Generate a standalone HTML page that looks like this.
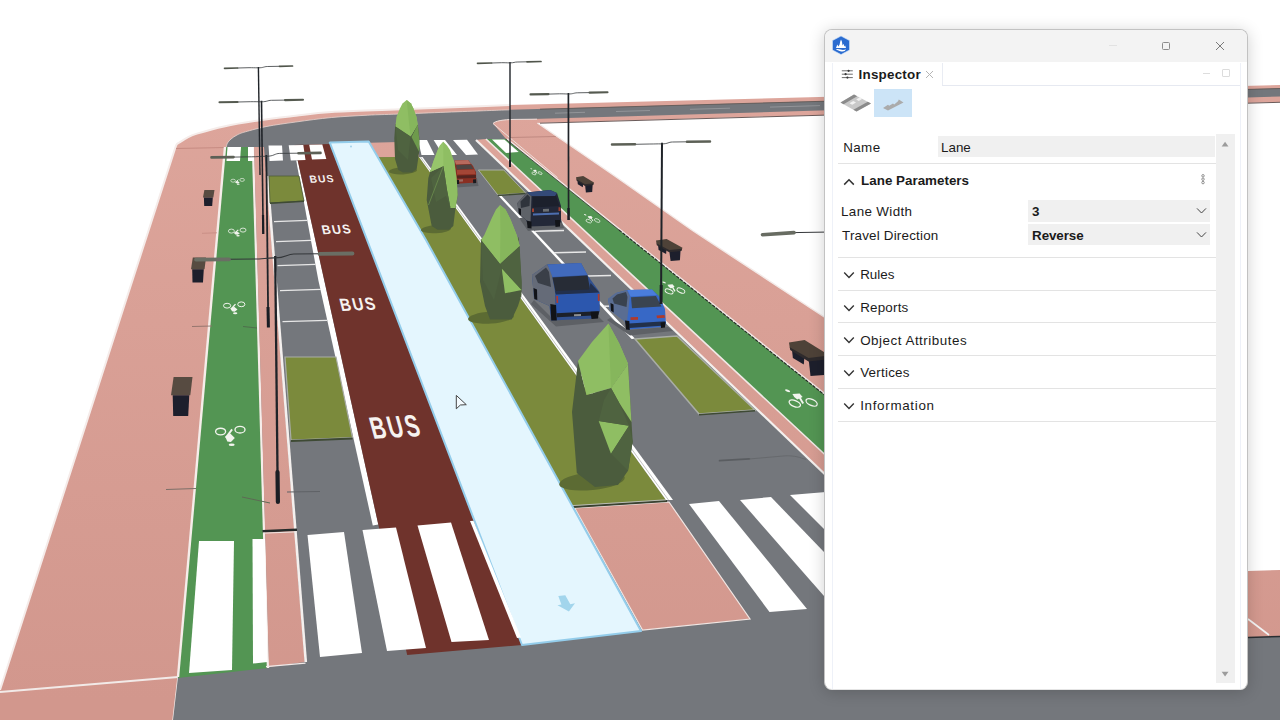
<!DOCTYPE html>
<html><head><meta charset="utf-8"><title>Inspector</title>
<style>
html,body{margin:0;padding:0;background:#fff;}
body{width:1280px;height:720px;overflow:hidden;position:relative;font-family:"Liberation Sans",sans-serif;}
#scene{position:absolute;left:0;top:0;width:1280px;height:720px;display:block;}
#win{position:absolute;left:824px;top:29px;width:424px;height:661px;box-sizing:border-box;background:#fff;border:1px solid #C2C2C2;border-bottom-color:#E4E4E4;border-radius:8px;
 box-shadow:0 2px 16px rgba(0,0,0,.19);overflow:hidden;}
#tb{position:absolute;left:0;top:0;width:100%;height:32px;background:#F3F3F3;}
.abs{position:absolute;}
.t{position:absolute;white-space:nowrap;color:#1b1b1b;font-size:13px;line-height:16px;}
.b{font-weight:bold;}
.sep{position:absolute;left:13px;width:378px;height:1px;background:#E3E3E3;}
.fld{position:absolute;background:#F0F0F0;}
</style></head><body>
<svg id="scene" width="1280" height="720" viewBox="0 0 1280 720">
<defs><linearGradient id="pk" gradientUnits="userSpaceOnUse" x1="0" y1="110" x2="0" y2="700"><stop offset="0" stop-color="#DDA59B"/><stop offset="1" stop-color="#D2978D"/></linearGradient></defs>
<rect width="1280" height="720" fill="#fff"/>
<path d="M0,720 L0,690 L175.4,147.5 C175.7,146.9 176.1,145.0 177.0,144.0 C177.9,143.0 179.1,142.7 180.8,141.7 C182.5,140.7 184.3,139.2 187.0,137.8 C189.7,136.5 190.8,135.5 197.0,133.6 C203.2,131.7 213.5,128.6 224.0,126.4 C234.5,124.2 247.8,122.0 259.8,120.2 C271.8,118.4 283.8,117.1 295.8,115.7 C307.8,114.3 314.3,113.1 331.7,112.0 C349.1,110.9 375.3,110.3 400.0,109.3 C424.7,108.3 461.7,106.9 480.0,106.2 C498.3,105.5 505.0,105.2 510.0,105.0 L1280,85 L1280,102 L537.5,123 L614,175.5 L692.5,230.5 L825,317.5 L1248,571 L1280,570 L1280,720 Z" fill="url(#pk)"/>
<path d="M0,690 L175.4,147.5 C175.7,146.9 176.1,145.0 177.0,144.0 C177.9,143.0 179.1,142.7 180.8,141.7 C182.5,140.7 184.3,139.2 187.0,137.8 C189.7,136.5 190.8,135.5 197.0,133.6 C203.2,131.7 213.5,128.6 224.0,126.4 C234.5,124.2 247.8,122.0 259.8,120.2 C271.8,118.4 283.8,117.1 295.8,115.7 C307.8,114.3 314.3,113.1 331.7,112.0 C349.1,110.9 375.3,110.3 400.0,109.3 C424.7,108.3 461.7,106.9 480.0,106.2 C498.3,105.5 505.0,105.2 510.0,105.0" fill="none" stroke="#F5ECEA" stroke-width="2.0"/>
<line x1="176.0" y1="148.5" x2="226.0" y2="147.5" stroke="#C0847B" stroke-width="0.80" />
<line x1="0.0" y1="692.0" x2="178.0" y2="677.0" stroke="#F2EAE8" stroke-width="1.80" />
<line x1="178.3" y1="677.0" x2="173.3" y2="720.0" stroke="#F2EAE8" stroke-width="2.00" />
<line x1="510.0" y1="137.5" x2="556.0" y2="136.5" stroke="#B8817A" stroke-width="0.80" />
<path d="M226.3,147.0 C226.5,146.3 226.7,144.3 227.5,143.0 C228.3,141.7 229.4,140.3 231.0,139.0 C232.6,137.7 234.6,136.2 237.0,135.0 C239.4,133.8 240.5,133.2 245.5,131.8 C250.5,130.4 258.6,128.0 267.0,126.4 C275.4,124.8 285.0,123.5 295.8,122.0 C306.6,120.5 319.7,118.6 331.7,117.5 C343.7,116.4 356.3,115.8 367.7,115.2 C379.1,114.6 381.3,114.7 400.0,114.0 C418.7,113.3 461.7,111.6 480.0,110.9 C498.3,110.2 505.0,110.0 510.0,109.8 L1280,88.3 L1280,96.5 L630,116.3 L514,119.4 C503,119.6 495,121 493,123.5 L506,139 L476,140 L726.5,380 L825,473 L1248,637 L1280,637 L1280,720 L173,720 L178,677 Z" fill="#74777C"/>
<line x1="1248.0" y1="637.5" x2="1280.0" y2="636.5" stroke="#2A2F33" stroke-width="1.50" />
<line x1="1248.0" y1="619.0" x2="1269.0" y2="635.0" stroke="#F4F4F4" stroke-width="1.60" />
<line x1="555.0" y1="113.2" x2="585.0" y2="112.3" stroke="#9A9C9F" stroke-width="0.80" />
<line x1="616.0" y1="111.5" x2="650.0" y2="110.5" stroke="#9A9C9F" stroke-width="0.80" />
<line x1="690.0" y1="109.3" x2="730.0" y2="108.2" stroke="#9A9C9F" stroke-width="0.80" />
<line x1="770.0" y1="107.1" x2="820.0" y2="105.6" stroke="#9A9C9F" stroke-width="0.80" />
<path d="M540,123.2 L1280,102.3" stroke="#5A4A48" stroke-width="0.9" fill="none"/>
<path d="M540,109.2 L1280,88.5" stroke="#5E5552" stroke-width="0.8" fill="none"/>
<path d="M226.3,147.0 C226.5,146.3 226.7,144.3 227.5,143.0 C228.3,141.7 229.4,140.3 231.0,139.0 C232.6,137.7 234.6,136.2 237.0,135.0 C239.4,133.8 240.5,133.2 245.5,131.8 C250.5,130.4 258.6,128.0 267.0,126.4 C275.4,124.8 285.0,123.5 295.8,122.0 C306.6,120.5 319.7,118.6 331.7,117.5 C343.7,116.4 356.3,115.8 367.7,115.2 C379.1,114.6 381.3,114.7 400.0,114.0 C418.7,113.3 461.7,111.6 480.0,110.9 C498.3,110.2 505.0,110.0 510.0,109.8" fill="none" stroke="#E6D3CE" stroke-width="0.8"/>
<path d="M537,119.2 L514,119.4 C503,119.6 495,121 493,123.5 L512.5,140 L557.5,177.5" fill="none" stroke="#EEDFDB" stroke-width="1.0"/>
<polygon points="225.0,147.0 253.0,147.0 268.0,668.0 177.9,678.0" fill="#539553" />
<line x1="225.0" y1="147.0" x2="178.0" y2="677.0" stroke="#F6EDEA" stroke-width="2.40" />
<line x1="253.0" y1="147.0" x2="268.0" y2="668.0" stroke="#F6EDEA" stroke-width="2.40" />
<polygon points="254.0,147.0 264.0,147.0 304.8,662.0 269.0,667.0" fill="url(#pk)" />
<line x1="267.3" y1="176.0" x2="305.8" y2="662.0" stroke="#F4F0EE" stroke-width="2.60" />
<line x1="262.5" y1="531.2" x2="297.0" y2="529.7" stroke="#262B2A" stroke-width="2.40" />
<line x1="263.0" y1="533.2" x2="297.0" y2="531.8" stroke="#EFE6E3" stroke-width="1.00" />
<polygon points="296.2,160.5 297.7,160.5 378.3,524.4 372.8,525.4 318.3,280.0" fill="#FFFFFF" />
<line x1="274.0" y1="221.6" x2="307.5" y2="220.4" stroke="#E8E8E8" stroke-width="1.30" />
<line x1="276.0" y1="241.6" x2="311.0" y2="240.4" stroke="#E8E8E8" stroke-width="1.30" />
<line x1="277.5" y1="265.6" x2="315.5" y2="264.4" stroke="#E8E8E8" stroke-width="1.30" />
<line x1="280.0" y1="290.6" x2="321.0" y2="289.4" stroke="#E8E8E8" stroke-width="1.30" />
<line x1="282.5" y1="321.6" x2="327.0" y2="320.4" stroke="#E8E8E8" stroke-width="1.30" />
<polygon points="269.0,176.0 299.0,176.0 304.0,201.0 270.0,203.0" fill="#7B8A3C" stroke="#4E5A38" stroke-width="0.8"/>
<line x1="270.0" y1="203.3" x2="304.0" y2="201.3" stroke="#3E4A34" stroke-width="1.60" />
<polygon points="285.0,357.0 336.0,357.0 352.5,437.5 291.0,440.0" fill="#7B8A3C" stroke="#A9ADA6" stroke-width="1.2"/>
<line x1="291.0" y1="441.0" x2="352.5" y2="438.5" stroke="#3E4A34" stroke-width="2.20" />
<polygon points="294.3,145.0 330.0,144.0 522.0,645.0 407.2,655.0" fill="#6F332C" />
<polygon points="370.0,142.7 419.0,141.5 419.0,156.7 378.5,157.2" fill="url(#pk)" />
<polygon points="377.5,157.2 419.0,156.7 666.0,500.0 573.1,506.0 425.0,240.0" fill="#7B8A3C" />
<polygon points="574.7,508.0 669.0,502.0 750.0,619.0 642.5,630.0" fill="url(#pk)" stroke="#F1E6E3" stroke-width="1.2"/>
<line x1="572.7" y1="507.0" x2="667.0" y2="501.0" stroke="#3A4230" stroke-width="1.80" />
<line x1="572.1" y1="505.6" x2="666.0" y2="499.8" stroke="#B9BBB4" stroke-width="1.00" />
<polygon points="419.0,157.0 422.5,157.0 673.0,500.0 666.0,500.0" fill="#FFFFFF" />
<line x1="420.5" y1="157.0" x2="668.5" y2="500.0" stroke="#A9ABA8" stroke-width="0.70" />
<polygon points="329.8,142.6 368.7,141.4 426.0,240.0 641.0,631.0 522.0,645.0" fill="#E4F6FE" stroke="#94CDEB" stroke-width="2.0" stroke-linejoin="round"/>
<polygon points="558.3,596.1 565.3,595.3 570.3,604.2 575.0,603.3 568.9,611.4 557.5,605.3 561.4,604.4" fill="#A2D5EC" />
<circle cx="351" cy="146.5" r="0.9" fill="#9CCFE8"/>
<polygon points="476.0,140.0 486.0,139.0 852.2,480.0 830.9,480.0" fill="url(#pk)" />
<polygon points="486.0,139.0 506.0,139.0 930.9,480.0 852.2,480.0" fill="#539553" />
<line x1="476.0" y1="140.0" x2="830.9" y2="480.0" stroke="#F4F0EE" stroke-width="2.20" />
<line x1="486.0" y1="139.0" x2="852.2" y2="480.0" stroke="#F1E9E6" stroke-width="1.60" />
<line x1="506.9" y1="139.0" x2="932.2" y2="480.0" stroke="#F1E9E6" stroke-width="1.70" />
<line x1="505.7" y1="139.0" x2="619.0" y2="230.0" stroke="#2F332F" stroke-width="0.80" />
<line x1="619.0" y1="230.0" x2="930.3" y2="480.0" stroke="#262A27" stroke-width="1.10" stroke-dasharray="3.4 1.2"/>
<path d="M537.5,123 L614,175.5 L692.5,230.5 L825,317.5" fill="none" stroke="#F3EAE8" stroke-width="1.4"/>
<polygon points="497.8,195.0 500.5,194.7 635.1,338.7 631.6,339.0" fill="#FFFFFF" />
<line x1="535.0" y1="231.3" x2="564.0" y2="230.5" stroke="#E8E8E8" stroke-width="1.40" />
<line x1="554.0" y1="252.8" x2="586.0" y2="252.0" stroke="#E8E8E8" stroke-width="1.40" />
<line x1="577.0" y1="276.3" x2="611.0" y2="275.5" stroke="#E8E8E8" stroke-width="1.40" />
<line x1="604.0" y1="306.3" x2="642.0" y2="305.5" stroke="#E8E8E8" stroke-width="1.40" />
<polygon points="478.4,170.0 503.8,170.0 525.6,193.0 497.8,195.0" fill="#7B8A3C" stroke="#A9ADA6" stroke-width="1"/>
<line x1="497.8" y1="195.5" x2="525.6" y2="193.5" stroke="#3E4A34" stroke-width="1.40" />
<polygon points="635.0,339.0 677.0,336.0 755.0,410.0 699.0,414.0" fill="#7B8A3C" stroke="#A9ADA6" stroke-width="1.6"/>
<line x1="699.0" y1="414.8" x2="755.0" y2="410.8" stroke="#3E4A34" stroke-width="1.60" />
<path d="M719.6,460.6 L749.4,458.9" stroke="#5A5D61" stroke-width="1.8" fill="none" stroke-linecap="round"/>
<path d="M749,459 L785.6,455.8 C795,455.6 800,457.5 806,459.5" stroke="#63666A" stroke-width="0.8" fill="none"/>
<polygon points="227.5,147.0 241.0,147.0 240.0,161.0 226.5,161.0" fill="#FFFFFF" />
<polygon points="248.0,147.0 253.5,147.0 254.0,161.0 248.0,161.0" fill="#FFFFFF" />
<polygon points="268.5,145.6 282.0,145.4 283.0,160.6 269.5,161.0" fill="#FFFFFF" />
<polygon points="288.7,145.3 303.3,145.0 305.5,160.0 290.8,160.5" fill="#FFFFFF" />
<polygon points="309.2,144.8 322.3,144.4 326.3,159.0 312.0,159.5" fill="#FFFFFF" />
<polygon points="418.0,140.0 427.0,140.0 434.5,155.0 421.5,155.0" fill="#FFFFFF" />
<polygon points="433.6,140.0 445.0,140.0 457.0,155.0 443.0,155.0" fill="#FFFFFF" />
<polygon points="453.0,140.0 467.0,139.7 478.0,154.5 466.0,155.0" fill="#FFFFFF" />
<polygon points="492.0,139.5 504.4,139.5 518.7,152.0 506.0,153.0" fill="#FFFFFF" />
<polygon points="199.0,541.0 234.0,541.0 232.0,670.0 189.0,673.0" fill="#FFFFFF" />
<polygon points="252.5,539.0 265.0,539.0 267.5,662.0 253.0,663.5" fill="#FFFFFF" />
<polygon points="307.5,535.0 344.0,532.0 362.0,653.0 320.0,657.0" fill="#FFFFFF" />
<polygon points="362.5,530.0 396.0,527.5 426.0,648.0 387.0,651.0" fill="#FFFFFF" />
<polygon points="417.5,525.5 451.0,522.5 489.0,640.0 451.5,642.0" fill="#FFFFFF" />
<polygon points="470.0,521.0 473.5,520.7 521.0,637.5 517.0,638.0" fill="#FFFFFF" />
<polygon points="689.0,504.0 719.0,501.0 807.0,609.0 769.5,612.0" fill="#FFFFFF" />
<polygon points="740.0,500.0 771.0,497.0 877.0,607.0 838.0,612.0" fill="#FFFFFF" />
<polygon points="790.0,495.0 826.0,492.0 914.0,572.0 870.0,575.0" fill="#FFFFFF" />
<text transform="translate(310.3 182.8) rotate(-1.5) skewX(10.0)" font-family="Liberation Sans, sans-serif" font-weight="bold" font-size="10.3" fill="#F6F2F0" letter-spacing="1.13" textLength="25.0" lengthAdjust="spacingAndGlyphs">BUS</text>
<text transform="translate(322.8 234.3) rotate(-2.0) skewX(11.0)" font-family="Liberation Sans, sans-serif" font-weight="bold" font-size="12.8" fill="#F6F2F0" letter-spacing="1.40" textLength="30.2" lengthAdjust="spacingAndGlyphs">BUS</text>
<text transform="translate(341.5 311.0) rotate(-2.5) skewX(12.0)" font-family="Liberation Sans, sans-serif" font-weight="bold" font-size="17.8" fill="#F6F2F0" letter-spacing="1.96" textLength="36.8" lengthAdjust="spacingAndGlyphs">BUS</text>
<text transform="translate(373.2 438.8) rotate(-3.4) skewX(12.0)" font-family="Liberation Sans, sans-serif" font-weight="bold" font-size="30.9" fill="#F6F2F0" letter-spacing="3.40" textLength="51.2" lengthAdjust="spacingAndGlyphs">BUS</text>
<g fill="none" stroke="#F2F4EE" stroke-width="0.65"><ellipse cx="233.1" cy="180.7" rx="2.3" ry="1.5"/><ellipse cx="242.1" cy="179.9" rx="2.3" ry="1.5"/><path d="M238.4,179.7 L235.5,182.3" stroke-width="0.91"/></g><polygon points="235.2,182.0 237.6,181.1 239.7,182.4 237.9,183.5 236.2,183.3" fill="#F2F4EE" /><ellipse cx="238.2" cy="184.2" rx="1.4" ry="0.6" fill="#F2F4EE"/>
<g fill="none" stroke="#F2F4EE" stroke-width="0.81"><ellipse cx="231.4" cy="231.1" rx="3.0" ry="2.0"/><ellipse cx="243.0" cy="230.1" rx="3.0" ry="2.0"/><path d="M238.3,229.9 L234.5,233.2" stroke-width="1.13"/></g><polygon points="234.1,232.8 237.2,231.7 239.9,233.3 237.6,234.7 235.4,234.5" fill="#F2F4EE" /><ellipse cx="238.0" cy="235.7" rx="1.8" ry="0.8" fill="#F2F4EE"/>
<g fill="none" stroke="#F2F4EE" stroke-width="0.99"><ellipse cx="227.1" cy="305.7" rx="3.6" ry="2.4"/><ellipse cx="241.3" cy="304.3" rx="3.6" ry="2.4"/><path d="M235.5,304.1 L230.9,309.2" stroke-width="1.39"/></g><polygon points="230.5,308.5 234.2,306.8 237.5,309.4 234.6,311.7 232.0,311.3" fill="#F2F4EE" /><ellipse cx="235.2" cy="313.3" rx="2.2" ry="1.0" fill="#F2F4EE"/>
<g fill="none" stroke="#F2F4EE" stroke-width="1.35"><ellipse cx="220.6" cy="431.5" rx="5.0" ry="3.3"/><ellipse cx="240.0" cy="429.7" rx="5.0" ry="3.3"/><path d="M232.1,429.4 L225.8,437.8" stroke-width="1.89"/></g><polygon points="225.2,436.6 230.3,433.6 234.8,438.1 230.9,442.0 227.3,441.4" fill="#F2F4EE" /><ellipse cx="231.7" cy="444.7" rx="3.0" ry="1.3" fill="#F2F4EE"/>
<g fill="none" stroke="#F2F4EE" stroke-width="0.65"><ellipse cx="533.9" cy="173.5" rx="2.2" ry="1.1" transform="rotate(22 533.9 173.5)"/><ellipse cx="540.1" cy="173.1" rx="2.2" ry="1.1" transform="rotate(25 540.1 173.1)"/><path d="M535.5,170.9 L537.0,173.5" stroke-width="0.91"/></g><polygon points="533.0,170.0 535.7,169.8 536.8,171.1 534.8,172.0 533.7,171.1" fill="#F2F4EE" /><ellipse cx="531.3" cy="168.8" rx="1.0" ry="0.4" fill="#F2F4EE" transform="rotate(20 531.3 168.8)"/>
<g fill="none" stroke="#F2F4EE" stroke-width="0.67"><ellipse cx="588.8" cy="221.1" rx="3.0" ry="1.5" transform="rotate(22 588.8 221.1)"/><ellipse cx="597.2" cy="220.5" rx="3.0" ry="1.5" transform="rotate(25 597.2 220.5)"/><path d="M590.9,217.5 L593.0,221.1" stroke-width="0.94"/></g><polygon points="587.6,216.3 591.2,216.0 592.7,217.8 590.0,219.0 588.5,217.8" fill="#F2F4EE" /><ellipse cx="585.2" cy="214.7" rx="1.3" ry="0.5" fill="#F2F4EE" transform="rotate(20 585.2 214.7)"/>
<g fill="none" stroke="#F2F4EE" stroke-width="0.94"><ellipse cx="669.1" cy="291.4" rx="4.2" ry="2.1" transform="rotate(22 669.1 291.4)"/><ellipse cx="680.9" cy="290.6" rx="4.2" ry="2.1" transform="rotate(25 680.9 290.6)"/><path d="M672.1,286.4 L675.0,291.4" stroke-width="1.32"/></g><polygon points="667.4,284.7 672.5,284.3 674.6,286.8 670.8,288.5 668.7,286.8" fill="#F2F4EE" /><ellipse cx="664.1" cy="282.4" rx="1.9" ry="0.7" fill="#F2F4EE" transform="rotate(20 664.1 282.4)"/>
<g fill="none" stroke="#F2F4EE" stroke-width="1.35"><ellipse cx="794.8" cy="403.6" rx="6.0" ry="3.0" transform="rotate(22 794.8 403.6)"/><ellipse cx="811.6" cy="402.4" rx="6.0" ry="3.0" transform="rotate(25 811.6 402.4)"/><path d="M799.0,396.4 L803.2,403.6" stroke-width="1.89"/></g><polygon points="792.4,394.0 799.6,393.4 802.6,397.0 797.2,399.4 794.2,397.0" fill="#F2F4EE" /><ellipse cx="787.6" cy="390.7" rx="2.7" ry="1.1" fill="#F2F4EE" transform="rotate(20 787.6 390.7)"/>
<polygon points="204.4,190.0 214.5,190.0 213.3,197.5 203.0,197.5" fill="#574B41" /><polygon points="203.9,197.5 212.8,197.5 212.2,206.0 204.2,206.0" fill="#1D1F2C" />
<polygon points="192.8,257.5 206.0,257.5 204.5,269.2 191.0,269.2" fill="#574B41" /><polygon points="192.2,269.2 203.8,269.2 203.0,282.5 192.5,282.5" fill="#1D1F2C" />
<polygon points="173.6,377.0 192.5,377.0 190.3,395.3 171.0,395.3" fill="#574B41" /><polygon points="172.7,395.3 189.3,395.3 188.2,416.0 173.2,416.0" fill="#1D1F2C" />
<polygon points="577.3,179.3 583.2,182.9 582.8,187.2 577.8,184.2" fill="#1D1F2C" /><polygon points="585.0,184.2 592.7,183.9 592.2,192.0 585.9,192.5" fill="#1D1F2C" /><polygon points="576.0,177.2 583.2,176.0 594.0,182.6 593.3,184.6 585.0,185.2 576.4,179.6" fill="#4E4238" /><polygon points="576.4,179.3 585.0,184.2 593.6,183.3 593.3,184.9 585.0,185.9 576.5,180.6" fill="#2E2A2C" />
<polygon points="657.9,243.4 666.6,248.2 666.1,254.0 658.6,250.0" fill="#1D1F2C" /><polygon points="669.2,250.0 680.6,249.6 679.9,260.3 670.6,261.0" fill="#1D1F2C" /><polygon points="656.0,240.5 666.6,239.0 682.5,247.8 681.4,250.4 669.2,251.3 656.5,243.8" fill="#4E4238" /><polygon points="656.5,243.4 669.2,250.0 682.0,248.7 681.4,250.9 669.2,252.2 656.8,245.2" fill="#2E2A2C" />
<polygon points="791.7,347.2 804.6,355.1 803.8,364.5 792.9,358.0" fill="#1D1F2C" /><polygon points="808.5,358.0 825.3,357.3 824.1,374.9 810.5,376.0" fill="#1D1F2C" /><polygon points="789.0,342.5 804.6,340.0 828.0,354.4 826.4,358.7 808.5,360.2 789.8,347.9" fill="#4E4238" /><polygon points="789.8,347.2 808.5,358.0 827.2,355.8 826.4,359.4 808.5,361.6 790.2,350.1" fill="#2E2A2C" />
<polygon points="453.0,178.0 477.0,178.0 478.5,186.0 456.0,187.5" fill="#5E6166" />
<polygon points="454.5,160.5 468.0,160.0 473.0,166.0 476.0,172.0 476.3,182.5 456.5,183.8 455.5,172.0" fill="#8A2F22" />
<polygon points="454.5,160.5 468.0,160.0 471.0,164.0 456.0,164.5" fill="#B86A5E" />
<polygon points="456.0,165.0 471.0,164.5 473.5,169.0 457.0,169.5" fill="#4E4442" />
<polygon points="457.0,170.0 474.5,169.5 475.5,174.0 457.0,174.5" fill="#A44636" />
<polygon points="457.0,175.5 476.0,175.0 476.0,178.0 457.0,178.5" fill="#54241F" />
<polygon points="458.5,179.5 463.0,179.3 463.0,181.5 458.5,181.7" fill="#9A6A62" />
<polygon points="456.8,180.0 459.0,180.0 459.2,184.0 457.0,184.0" fill="#1A1A1E" />
<polygon points="473.0,179.5 476.0,179.3 476.2,183.0 473.2,183.2" fill="#1A1A1E" />
<polygon points="519.0,218.0 560.0,216.0 564.0,228.0 528.0,231.0" fill="#5C5F64" />
<polygon points="517.5,203.0 527.0,192.5 550.0,190.0 557.0,193.0 561.0,206.0 561.0,222.0 557.5,225.5 528.5,226.5 526.0,220.0 518.5,213.0" fill="#232838" />
<polygon points="517.5,203.0 527.0,192.5 531.5,196.0 530.5,222.0 526.0,220.0 518.5,213.0" fill="#5E6268" />
<polygon points="520.5,201.5 527.5,194.5 530.0,197.0 529.5,206.0 521.0,208.0" fill="#2F343C" />
<polygon points="527.0,192.5 550.0,190.0 557.0,193.0 555.0,196.0 531.5,196.0" fill="#344A78" />
<polygon points="532.5,197.0 556.0,196.0 559.5,206.0 532.5,207.5" fill="#1C202C" />
<polygon points="533.0,213.5 559.0,212.5 559.0,214.5 533.0,215.5" fill="#4D6FB0" />
<polygon points="543.0,209.0 549.0,208.8 549.0,211.6 543.0,211.8" fill="#6A6E72" />
<polygon points="532.0,208.5 534.0,208.4 534.0,212.0 532.0,212.0" fill="#A04030" />
<polygon points="558.5,207.3 560.5,207.2 560.5,211.0 558.5,211.0" fill="#A04030" />
<polygon points="527.0,221.0 531.5,221.5 531.5,228.5 527.5,228.0" fill="#121419" />
<polygon points="555.0,220.0 560.0,220.0 560.0,226.5 555.5,227.0" fill="#121419" />
<polygon points="518.5,208.0 521.0,209.0 521.0,215.5 519.0,214.0" fill="#121419" />
<polygon points="534.0,300.0 552.0,318.0 598.0,316.0 604.0,322.0 556.0,326.5 531.0,304.0" fill="#5D6065" />
<polygon points="532.0,275.0 547.0,264.5 581.0,263.0 588.0,276.0 599.5,292.0 599.5,312.0 595.0,318.5 551.0,320.5 549.5,306.0 534.0,299.0" fill="#31508F" />
<polygon points="532.0,275.0 547.0,264.5 551.0,270.0 555.0,292.0 555.5,311.0 549.5,306.0 534.0,299.0" fill="#656B78" />
<polygon points="535.0,276.0 546.0,267.5 549.0,272.0 551.0,287.0 538.0,283.0" fill="#3A3F48" />
<polygon points="547.5,264.5 581.0,263.0 587.5,275.0 552.5,277.0" fill="#416ABC" />
<polygon points="552.5,277.5 587.5,275.5 590.5,292.0 556.0,294.0" fill="#272C36" />
<polygon points="556.0,294.5 599.3,292.5 599.6,311.0 556.5,313.0" fill="#2C57AE" />
<polygon points="590.5,283.0 599.3,292.5 556.0,294.5 555.2,291.0 589.0,289.5" fill="#22304E" />
<polygon points="556.5,313.3 599.3,311.3 598.3,315.3 557.0,317.3" fill="#1C2029" />
<polygon points="574.0,314.2 581.0,313.9 581.0,316.0 574.0,316.3" fill="#8E9092" />
<polygon points="556.3,296.0 558.0,296.0 558.2,303.0 556.5,303.0" fill="#B03A2C" />
<polygon points="597.8,294.0 599.4,294.0 599.5,301.0 597.9,301.0" fill="#B03A2C" />
<polygon points="550.3,304.0 556.0,305.0 556.8,320.5 551.3,320.5" fill="#111318" />
<polygon points="590.5,311.8 598.5,311.4 598.0,318.5 591.5,319.0" fill="#111318" />
<polygon points="533.5,288.0 537.0,289.5 537.3,300.0 534.3,299.0" fill="#111318" />
<polygon points="610.0,318.0 628.0,330.0 668.0,327.0 673.0,331.0 630.0,335.5 607.0,320.0" fill="#5E6166" />
<polygon points="608.0,299.0 616.0,293.0 627.0,290.0 652.0,289.5 659.0,296.0 665.0,309.0 666.0,324.0 662.0,327.0 628.0,329.5 624.5,321.0 610.0,310.0" fill="#3768C6" />
<polygon points="608.0,299.0 616.0,293.0 627.0,290.0 630.0,296.0 627.0,321.5 624.5,321.0 610.0,310.0" fill="#5A6D92" />
<polygon points="612.5,298.5 617.0,294.5 626.0,292.0 627.5,297.0 626.5,307.0 614.0,303.5" fill="#39424F" />
<polygon points="627.5,290.0 652.0,289.5 657.0,295.0 630.5,296.5" fill="#4A7DDC" />
<polygon points="631.0,297.3 656.0,296.0 661.5,306.5 632.0,308.3" fill="#3A4450" />
<polygon points="630.5,317.3 638.0,316.9 638.0,319.7 630.5,320.1" fill="#B03A2C" />
<polygon points="656.5,315.5 664.5,315.0 665.0,317.7 657.0,318.2" fill="#B03A2C" />
<polygon points="629.0,323.5 665.5,321.2 665.0,325.5 629.5,328.0" fill="#22304A" />
<polygon points="625.0,320.5 629.3,321.0 629.8,330.0 626.0,329.5" fill="#111318" />
<polygon points="660.5,322.5 665.5,322.0 665.0,327.5 661.0,328.0" fill="#111318" />
<polygon points="610.5,303.0 613.5,304.5 613.7,312.5 611.0,310.8" fill="#111318" />
<ellipse cx="403.0" cy="170.8" rx="14.0" ry="3.6" fill="#5C6B33" transform="rotate(-3.0 403.0 170.8)"/>
<polygon points="395.3,124.0 394.3,138.3 395.0,159.0 398.3,170.0 403.0,172.6 412.0,172.4 416.7,169.0 419.3,151.0 419.3,138.3 417.7,124.0 411.0,136.0" fill="#4B5C3D" />
<polygon points="406.7,100.0 411.0,103.5 413.3,108.3 416.5,117.0 417.7,124.5 410.5,136.5 395.4,126.5 396.5,117.0 400.0,108.3 402.5,103.5" fill="#8FBE63" />
<polygon points="406.7,100.0 411.0,103.5 413.3,108.3 416.5,117.0 417.7,124.5 410.5,136.5 408.5,118.0" fill="#86B65C" />
<polygon points="417.7,124.5 419.4,140.0 419.2,152.0 411.5,137.0" fill="#6E9A4C" />
<polygon points="395.4,126.5 410.5,136.5 408.0,160.0 398.0,150.0" fill="#4F6340" />
<ellipse cx="436.0" cy="229.2" rx="15.0" ry="4.0" fill="#5C6B33" transform="rotate(-3.0 436.0 229.2)"/>
<polygon points="430.7,170.0 443.4,166.0 454.0,163.0 457.7,195.0 455.0,212.0 453.3,226.0 449.0,229.8 437.5,229.8 431.7,226.0 426.7,200.0 428.3,178.3" fill="#4B5C3D" />
<polygon points="443.3,141.7 447.0,145.5 450.0,150.0 454.3,161.7 456.7,178.3 457.7,195.0 455.5,208.0 450.5,208.0 447.0,190.0 443.4,166.0 430.0,172.0 433.3,161.7 437.7,150.0 440.0,145.5" fill="#8FBE63" />
<polygon points="443.3,141.7 443.4,166.0 430.0,172.0 433.3,161.7 437.7,150.0 440.0,145.5" fill="#97C56B" />
<polygon points="443.4,166.0 447.0,190.0 450.5,208.0 446.0,196.0 436.0,202.0 431.0,178.0" fill="#4F6340" />
<line x1="443.4" y1="166.0" x2="428.5" y2="205.0" stroke="#6C8F4E" stroke-width="0.80" />
<ellipse cx="491.0" cy="317.5" rx="23.0" ry="6.0" fill="#5C6B33" transform="rotate(-4.0 491.0 317.5)"/>
<polygon points="481.0,238.5 500.0,258.5 518.5,237.0 521.7,281.7 521.5,295.0 518.0,306.0 511.7,319.5 490.0,319.5 485.0,306.0 480.0,281.7" fill="#4B5C3D" />
<polygon points="500.0,205.0 505.5,209.5 510.0,218.3 516.7,235.0 519.7,246.0 500.0,264.0 481.0,240.0 484.3,235.0 491.7,218.3 496.0,209.5" fill="#8FBE63" />
<polygon points="500.0,205.0 505.5,209.5 510.0,218.3 516.7,235.0 519.7,246.0 500.0,264.0 500.5,232.0" fill="#86B65C" />
<polygon points="501.7,268.3 521.7,290.0 505.0,293.3" fill="#8FBE63" />
<polygon points="500.0,264.0 519.7,246.0 521.7,290.0 501.7,268.3" fill="#4F6340" />
<polygon points="481.0,240.0 500.0,264.0 501.7,268.3 494.0,300.0 483.0,280.0" fill="#4E6140" />
<ellipse cx="592.0" cy="481.0" rx="33.0" ry="9.0" fill="#5C6B33" transform="rotate(-6.0 592.0 481.0)"/>
<polygon points="578.0,361.0 586.5,395.0 611.0,388.0 628.0,364.0 631.5,422.0 632.7,441.5 628.0,470.7 618.0,485.0 595.0,487.0 576.8,473.0 572.0,412.0" fill="#4B5C3D" />
<polygon points="608.4,323.5 619.0,343.0 628.0,363.7 611.0,388.0 586.5,395.0 578.0,361.0 592.0,342.0" fill="#8FBE63" />
<polygon points="608.4,323.5 619.0,343.0 628.0,363.7 611.0,388.0" fill="#86B65C" />
<polygon points="628.0,364.0 631.5,422.0 619.0,402.6 611.0,388.0" fill="#8FBE63" />
<polygon points="598.7,421.0 629.0,425.7 611.0,453.7" fill="#8FBE63" />
<polygon points="611.0,388.0 619.0,402.6 629.0,425.7 598.7,421.0 604.0,400.0" fill="#4F6340" />
<polygon points="629.0,425.7 632.7,441.5 628.0,470.7 611.0,453.7" fill="#4F6340" />
<line x1="258.4" y1="67.0" x2="260.0" y2="175.0" stroke="#1F2328" stroke-width="1.40" /><path d="M237.5,68.0 L249.0,67.7 C253.2,67.7 254.2,67.8 258.4,67.8" fill="none" stroke="#34373A" stroke-width="0.80"/><path d="M258.4,67.8 C263.7,67.8 263.7,66.6 267.3,66.5 L279.5,66.3" fill="none" stroke="#34373A" stroke-width="0.80"/><line x1="224.5" y1="68.3" x2="237.5" y2="68.0" stroke="#50554B" stroke-width="1.70" stroke-linecap="round"/><line x1="279.5" y1="66.3" x2="292.5" y2="66.0" stroke="#50554B" stroke-width="1.70" stroke-linecap="round"/>
<line x1="261.5" y1="100.8" x2="263.2" y2="234.0" stroke="#1F2328" stroke-width="1.60" /><path d="M237.5,102.0 L250.7,101.7 C255.5,101.7 256.7,101.7 261.5,101.8" fill="none" stroke="#34373A" stroke-width="0.80"/><path d="M261.5,101.8 C267.4,101.7 267.4,100.4 271.4,100.3 L285.0,100.1" fill="none" stroke="#34373A" stroke-width="0.80"/><line x1="219.5" y1="102.3" x2="237.5" y2="102.0" stroke="#555A50" stroke-width="2.10" stroke-linecap="round"/><line x1="285.0" y1="100.1" x2="303.0" y2="99.8" stroke="#555A50" stroke-width="2.10" stroke-linecap="round"/>
<line x1="266.3" y1="155.0" x2="268.3" y2="327.0" stroke="#1F2328" stroke-width="1.80" /><path d="M233.5,157.1 L251.5,156.8 C258.1,156.8 259.7,156.2 266.3,156.3" fill="none" stroke="#34373A" stroke-width="0.80"/><path d="M266.3,156.3 C274.4,156.2 274.4,153.5 279.8,153.4 L298.5,153.2" fill="none" stroke="#34373A" stroke-width="0.80"/><line x1="211.5" y1="157.4" x2="233.5" y2="157.1" stroke="#5C6056" stroke-width="2.60" stroke-linecap="round"/><line x1="298.5" y1="153.2" x2="320.5" y2="152.9" stroke="#5C6056" stroke-width="2.60" stroke-linecap="round"/>
<line x1="275.2" y1="256.0" x2="277.8" y2="500.0" stroke="#1F2328" stroke-width="2.30" /><path d="M229.0,259.3 L254.4,259.0 C263.6,259.0 266.0,257.7 275.2,257.9" fill="none" stroke="#34373A" stroke-width="1.06"/><path d="M275.2,257.9 C286.3,257.7 286.3,254.1 293.8,254.0 L319.5,253.8" fill="none" stroke="#34373A" stroke-width="1.06"/><line x1="196.0" y1="259.6" x2="229.0" y2="259.3" stroke="#6A6E64" stroke-width="3.80" stroke-linecap="round"/><line x1="319.5" y1="253.8" x2="352.5" y2="253.5" stroke="#6A6E64" stroke-width="3.80" stroke-linecap="round"/>
<line x1="277.5" y1="472.0" x2="277.9" y2="502.0" stroke="#1A1D24" stroke-width="4.20" stroke-linecap="round"/>
<line x1="268.0" y1="307.0" x2="268.4" y2="327.5" stroke="#1A1D24" stroke-width="3.00" />
<line x1="263.0" y1="215.0" x2="263.3" y2="234.0" stroke="#1A1D24" stroke-width="2.20" />
<line x1="510.0" y1="62.0" x2="510.0" y2="167.0" stroke="#1F2328" stroke-width="1.40" /><path d="M491.5,63.0 L501.7,62.7 C505.4,62.7 506.3,62.8 510.0,62.9" fill="none" stroke="#34373A" stroke-width="0.80"/><path d="M510.0,62.9 C514.2,62.8 514.2,62.1 517.1,62.0 L527.0,61.8" fill="none" stroke="#34373A" stroke-width="0.80"/><line x1="477.5" y1="63.3" x2="491.5" y2="63.0" stroke="#50554B" stroke-width="1.70" stroke-linecap="round"/><line x1="527.0" y1="61.8" x2="541.0" y2="61.5" stroke="#50554B" stroke-width="1.70" stroke-linecap="round"/>
<line x1="568.4" y1="93.0" x2="568.6" y2="220.0" stroke="#1F2328" stroke-width="1.70" /><path d="M548.5,94.1 L559.4,93.8 C563.4,93.8 564.4,93.9 568.4,94.0" fill="none" stroke="#34373A" stroke-width="0.80"/><path d="M568.4,94.0 C573.7,93.9 573.7,92.9 577.3,92.8 L589.5,92.6" fill="none" stroke="#34373A" stroke-width="0.80"/><line x1="530.5" y1="94.4" x2="548.5" y2="94.1" stroke="#555A50" stroke-width="2.10" stroke-linecap="round"/><line x1="589.5" y1="92.6" x2="607.5" y2="92.3" stroke="#555A50" stroke-width="2.10" stroke-linecap="round"/>
<line x1="662.0" y1="142.7" x2="661.0" y2="304.0" stroke="#1F2328" stroke-width="2.00" /><path d="M635.0,144.3 L649.9,144.0 C655.2,144.0 656.6,143.8 662.0,143.9" fill="none" stroke="#34373A" stroke-width="0.80"/><path d="M662.0,143.9 C668.2,143.8 668.2,142.1 672.5,142.0 L687.0,141.8" fill="none" stroke="#34373A" stroke-width="0.80"/><line x1="612.0" y1="144.6" x2="635.0" y2="144.3" stroke="#5C6056" stroke-width="2.50" stroke-linecap="round"/><line x1="687.0" y1="141.8" x2="710.0" y2="141.5" stroke="#5C6056" stroke-width="2.50" stroke-linecap="round"/>
<line x1="661.2" y1="285.0" x2="661.0" y2="304.0" stroke="#1A1D24" stroke-width="3.00" />
<line x1="568.5" y1="208.0" x2="568.6" y2="220.0" stroke="#1A1D24" stroke-width="2.40" />
<line x1="510.0" y1="160.0" x2="510.0" y2="167.0" stroke="#1A1D24" stroke-width="2.00" />
<line x1="794.0" y1="232.6" x2="830.0" y2="232.0" stroke="#34373A" stroke-width="1.00" />
<line x1="762.5" y1="234.7" x2="794.0" y2="232.6" stroke="#686C62" stroke-width="3.60" stroke-linecap="round"/>
<line x1="192.0" y1="326.5" x2="212.0" y2="326.0" stroke="#8F706A" stroke-width="0.90" />
<line x1="202.0" y1="233.3" x2="217.0" y2="232.8" stroke="#C58A82" stroke-width="0.80" />
<line x1="243.0" y1="326.5" x2="257.0" y2="328.0" stroke="#4E6A4C" stroke-width="0.90" />
<line x1="266.0" y1="666.6" x2="305.5" y2="663.2" stroke="#F2EAE8" stroke-width="1.30" />
<line x1="166.0" y1="489.5" x2="196.0" y2="488.5" stroke="#7C6F68" stroke-width="1.00" />
<line x1="242.0" y1="497.0" x2="270.0" y2="503.0" stroke="#5E6A55" stroke-width="1.00" />
<line x1="287.0" y1="492.0" x2="320.0" y2="491.5" stroke="#5F6266" stroke-width="1.20" />
<path d="M456.3,395.4 L456.3,408.8 L460.4,405 L466.3,404.7 Z" fill="#F4FBFF" stroke="#444" stroke-width="1.0" stroke-linejoin="round"/>
</svg>
<div id="win">
 <div id="tb"></div>
 <svg class="abs" style="left:6.1px;top:5px" width="20" height="22" viewBox="0 0 20 22"><path d="M10,1 L18.5,5.6 L18.5,15 L10,19.6 L1.5,15 L1.5,5.6 Z" fill="#2B6CD0" stroke="#CFE3FA" stroke-width="0.6"/><path d="M5,13 L6.3,9.6 L7.4,11.6 L8.6,9.4 L9.3,6.2 L10,4.6 L10.9,6.4 L11.6,10.4 L12.6,8.8 L13.4,11.4 L14.2,10.4 L15,13 Z" fill="#fff"/><path d="M4.8,14.2 Q7,13.6 9.6,14.6 Q12.4,15.6 15.2,14.2 Q13.6,17 10.4,16.4 Q8,16 7.4,15.4 Q6,15 4.8,14.2 Z" fill="#fff"/></svg>
 <div class="abs" style="left:283.5px;top:15px;width:8px;height:1px;background:#E2E2E2"></div>
 <div class="abs" style="left:337px;top:11.6px;width:6px;height:6px;border:1px solid #8C8C8C;border-radius:1.5px;box-sizing:content-box"></div>
 <svg class="abs" style="left:390px;top:10.5px" width="10" height="10" viewBox="0 0 10 10"><path d="M1,1 L9,9 M9,1 L1,9" stroke="#7A7A7A" stroke-width="1" fill="none"/></svg>
 <div class="abs" style="left:7px;top:33px;width:1px;height:628px;background:#EEF1F8"></div>
 <div class="abs" style="left:414.5px;top:33px;width:1px;height:628px;background:#EEF1F8"></div>
 <div class="abs" style="left:117px;top:33px;width:1px;height:23px;background:#E9ECF3"></div>
 <div class="abs" style="left:117px;top:55px;width:298px;height:1px;background:#E6E9F1"></div>
 <svg class="abs" style="left:15.6px;top:38.6px" width="13" height="11" viewBox="0 0 13 11"><g stroke="#5A5A5A" stroke-width="0.9" fill="none"><path d="M0.8,1.8 H11.8 M0.8,5.2 H11.8 M0.8,8.6 H11.8"/></g><g fill="#3A3A3A"><circle cx="7.6" cy="1.8" r="1.1"/><circle cx="4.6" cy="5.2" r="1.1"/><circle cx="6.4" cy="8.6" r="1.1"/></g></svg>
 <div class="t b" id="t_insp" style="left:33.6px;top:37.0px;font-size:13.4px;letter-spacing:0.22px">Inspector</div>
 <svg class="abs" style="left:100px;top:40px" width="9" height="9" viewBox="0 0 9 9"><path d="M1,1 L8,8 M8,1 L1,8" stroke="#B5B5B5" stroke-width="1" fill="none"/></svg>
 <div class="abs" style="left:377.5px;top:42.5px;width:7px;height:1px;background:#DDD"></div>
 <div class="abs" style="left:396.5px;top:38.5px;width:6.5px;height:6.5px;border:1px solid #DCDCDC;border-radius:1px"></div>
 <svg class="abs" style="left:14px;top:61px" width="34" height="24" viewBox="0 0 34 24"><path d="M1.5,11.5 L15,3.5 L32,12.5 L17.5,20.5 Z" fill="#C9C9C9"/><path d="M1.5,11.5 L15,3.5 L18.2,5.2 L4.6,13.3 Z" fill="#8A8A8A"/><path d="M14.4,18.8 L28.8,10.8 L32,12.5 L17.5,20.5 Z" fill="#8A8A8A"/><path d="M10.5,12.3 L14.3,10.1 L17,11.5 L13.2,13.8 Z M17.2,8.4 L20.8,6.3 L23.4,7.7 L19.8,9.9 Z" fill="#F2F2F2"/></svg>
 <div class="abs" style="left:49px;top:59px;width:38px;height:28px;background:#CCE4F7"></div>
 <svg class="abs" style="left:49px;top:59px" width="38" height="28" viewBox="0 0 38 28"><path d="M9,19 L14,15.8 L15.2,16.8 L19,14.4 L20.2,15.4 L24,12.2 L24.8,10.4 L29.5,13.4 L14,21.6 Z" fill="#ABABAB"/></svg>
 <div class="t" id="t_name" style="left:18.2px;top:109.5px;font-size:13.4px;letter-spacing:0.40px">Name</div>
 <div class="fld" style="left:113px;top:105.5px;width:277px;height:21px;"></div>
 <div class="t" id="t_lane" style="left:116.0px;top:109.5px;font-size:13.4px;letter-spacing:0.00px">Lane</div>
 <div class="sep" style="top:133px"></div>
 <svg class="abs" style="left:18px;top:147.5px" width="12" height="8" viewBox="0 0 12 8"><path d="M1.2,6.6 L6,1.8 L10.8,6.6" stroke="#333" stroke-width="1.5" fill="none"/></svg>
 <div class="t b" id="t_lp" style="left:36.1px;top:143.0px;font-size:13.4px;letter-spacing:0.00px">Lane Parameters</div>
 <svg class="abs" style="left:374.6px;top:144.3px" width="6" height="12" viewBox="0 0 6 12"><g fill="none" stroke="#777" stroke-width="0.8"><circle cx="3" cy="1.8" r="1.25"/><circle cx="3" cy="5.2" r="1.25"/><circle cx="3" cy="8.6" r="1.25"/></g></svg>
 <div class="t" id="t_lw" style="left:16.0px;top:174.0px;font-size:13.4px;letter-spacing:0.37px">Lane Width</div>
 <div class="fld" style="left:203px;top:170px;width:182px;height:21.5px;"></div>
 <div class="t b" id="t_3" style="left:207.1px;top:174.0px;font-size:13.4px;letter-spacing:0.00px">3</div>
 <svg class="abs" style="left:371px;top:177.4px" width="11" height="8" viewBox="0 0 11 8"><path d="M1,1.4 L5.5,6 L10,1.4" stroke="#444" stroke-width="1" fill="none"/></svg>
 <div class="t" id="t_td" style="left:17.0px;top:197.5px;font-size:13.4px;letter-spacing:0.20px">Travel Direction</div>
 <div class="fld" style="left:203px;top:194px;width:182px;height:21px;"></div>
 <div class="t b" id="t_rev" style="left:207.1px;top:197.5px;font-size:13.4px;letter-spacing:-0.10px">Reverse</div>
 <svg class="abs" style="left:371px;top:200.9px" width="11" height="8" viewBox="0 0 11 8"><path d="M1,1.4 L5.5,6 L10,1.4" stroke="#444" stroke-width="1" fill="none"/></svg>
 <div class="sep" style="top:226.7px"></div>
 <svg class="abs" style="left:18px;top:240.8px" width="12" height="8" viewBox="0 0 12 8"><path d="M1.2,1.6 L6,6.4 L10.8,1.6" stroke="#333" stroke-width="1.4" fill="none"/></svg>
 <div class="t" id="t_s0" style="left:35.2px;top:237.0px;font-size:13.4px;letter-spacing:0.00px">Rules</div>
 <div class="sep" style="top:259.5px"></div>
 <svg class="abs" style="left:18px;top:273.6px" width="12" height="8" viewBox="0 0 12 8"><path d="M1.2,1.6 L6,6.4 L10.8,1.6" stroke="#333" stroke-width="1.4" fill="none"/></svg>
 <div class="t" id="t_s1" style="left:35.2px;top:269.8px;font-size:13.4px;letter-spacing:0.20px">Reports</div>
 <div class="sep" style="top:292.3px"></div>
 <svg class="abs" style="left:18px;top:306.4px" width="12" height="8" viewBox="0 0 12 8"><path d="M1.2,1.6 L6,6.4 L10.8,1.6" stroke="#333" stroke-width="1.4" fill="none"/></svg>
 <div class="t" id="t_s2" style="left:35.2px;top:302.6px;font-size:13.4px;letter-spacing:0.51px">Object Attributes</div>
 <div class="sep" style="top:325.1px"></div>
 <svg class="abs" style="left:18px;top:339.2px" width="12" height="8" viewBox="0 0 12 8"><path d="M1.2,1.6 L6,6.4 L10.8,1.6" stroke="#333" stroke-width="1.4" fill="none"/></svg>
 <div class="t" id="t_s3" style="left:35.2px;top:335.4px;font-size:13.4px;letter-spacing:0.24px">Vertices</div>
 <div class="sep" style="top:357.9px"></div>
 <svg class="abs" style="left:18px;top:372.0px" width="12" height="8" viewBox="0 0 12 8"><path d="M1.2,1.6 L6,6.4 L10.8,1.6" stroke="#333" stroke-width="1.4" fill="none"/></svg>
 <div class="t" id="t_s4" style="left:35.2px;top:368.2px;font-size:13.4px;letter-spacing:0.68px">Information</div>
 <div class="sep" style="top:390.7px"></div>
 <div class="abs" style="left:391px;top:104.3px;width:19px;height:549px;background:#F0F0F0"></div>
 <svg class="abs" style="left:396.2px;top:110.6px" width="9" height="7" viewBox="0 0 10 8"><path d="M4.5,0.8 L8.4,6.4 L0.6,6.4 Z" fill="#9C9C9C"/></svg>
 <svg class="abs" style="left:396.2px;top:640.6px" width="9" height="7" viewBox="0 0 10 8"><path d="M4.5,6.4 L8.4,0.8 L0.6,0.8 Z" fill="#9C9C9C"/></svg>
</div>
</body></html>
